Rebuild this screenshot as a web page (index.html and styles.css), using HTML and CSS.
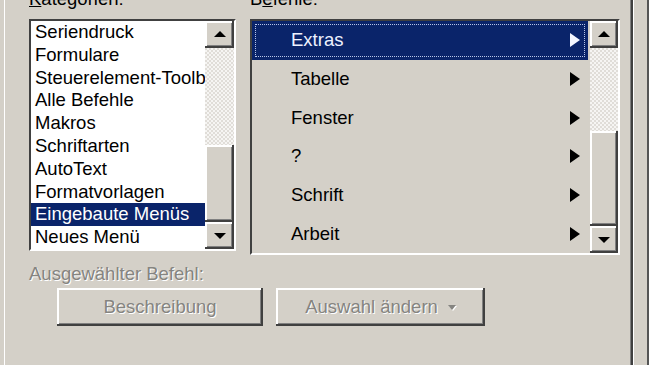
FILE: index.html
```html
<!DOCTYPE html>
<html lang="de">
<head>
  <meta charset="UTF-8">
  <meta name="viewport" content="width=device-width, initial-scale=1.0">
  <title>Anpassen - Befehle</title>
  <link rel="stylesheet" href="styles.css">
</head>
<body>
  <div class="outer">
    <div class="mid">
      <div class="tab">
        <div class="lists">
          <div class="group group-cat">
            <div class="label"><u>K</u>ategorien:</div>
            <div class="listbox cat">
              <ul class="items">
                <li>Seriendruck</li>
                <li>Formulare</li>
                <li>Steuerelement-Toolbox</li>
                <li>Alle Befehle</li>
                <li>Makros</li>
                <li>Schriftarten</li>
                <li>AutoText</li>
                <li>Formatvorlagen</li>
                <li class="sel">Eingebaute Menüs</li>
                <li>Neues Menü</li>
              </ul>
              <div class="scrollbar">
                <div class="sbtn"><span class="arr-up"></span></div>
                <div class="track"><div class="thumb"></div></div>
                <div class="sbtn"><span class="arr-down"></span></div>
              </div>
            </div>
          </div>

          <div class="group group-cmd">
            <div class="label">B<u>e</u>fehle:</div>
            <div class="listbox cmd">
              <ul class="items">
                <li class="sel"><span>Extras</span><span class="sub"></span></li>
                <li><span>Tabelle</span><span class="sub"></span></li>
                <li><span>Fenster</span><span class="sub"></span></li>
                <li><span>?</span><span class="sub"></span></li>
                <li><span>Schrift</span><span class="sub"></span></li>
                <li><span>Arbeit</span><span class="sub"></span></li>
              </ul>
              <div class="scrollbar">
                <div class="sbtn"><span class="arr-up"></span></div>
                <div class="track"><div class="thumb"></div></div>
                <div class="sbtn"><span class="arr-down"></span></div>
              </div>
            </div>
          </div>
        </div>

        <div class="selected-label">Ausgewählter Befehl:</div>
        <div class="buttons">
          <button class="btn" disabled>Beschreibung</button>
          <button class="btn btn-wide" disabled>Auswahl ändern <span class="drop"></span></button>
        </div>
      </div>
    </div>
  </div>
</body>
</html>
```

FILE: styles.css
```css
/* Win2000 classic colours */
:root {
  --face: #d4d0c8;
  --shadow: #808080;
  --dark: #404040;
  --light: #fff;
  --select: #0a246a;
}
* { box-sizing: border-box; }
body {
  margin: 0;
  background: var(--face);
  font-family: "Liberation Sans", Arial, sans-serif;
  font-size: 18.5px;
  color: #000;
  overflow: hidden;
}
.outer {
  width: 649px;
  height: 365px;
  padding-left: 4px;
  border-right: 2px solid #555;
  overflow: hidden;
}
.mid {
  height: 100%;
  border-left: 1px solid var(--light);
  padding-left: 9px;
}
.tab {
  width: 620px;
  height: 100%;
  padding-left: 15px;
  display: flex;
  flex-direction: column;
  align-items: flex-start;
  box-shadow: inset -1px 0 var(--light), inset -3px 0 var(--dark), inset -4px 0 var(--shadow);
}

/* lists */
.lists {
  display: flex;
  gap: 14px;
  align-items: flex-start;
  margin-top: -12px;
}
.group-cat { width: 207px; }
.group-cmd { width: 370px; }
.label {
  line-height: 21px;
  margin-bottom: 10px;
}
.listbox {
  display: flex;
  border: 2px solid;
  border-color: var(--dark) var(--light) var(--light) var(--dark);
}
.items {
  flex: 1;
  min-width: 0;
  list-style: none;
  margin: 0;
  padding: 0;
}
.cat {
  height: 232px;
  background: #fff;
}
.cat li {
  height: 22.8px;
  line-height: 22.8px;
  padding-left: 4px;
  white-space: nowrap;
  overflow: hidden;
}
.cat li.sel {
  background: var(--select);
  color: #fff;
}
.cat .scrollbar { width: 29px; }
.cmd {
  height: 236px;
  background: var(--face);
}
.cmd li {
  height: 38.67px;
  display: flex;
  align-items: center;
  justify-content: space-between;
  padding: 0 10px 0 39px;
}
.cmd li.sel {
  background: var(--select);
  color: #eef2ff;
  margin-right: 2px;
  padding-right: 8px;
  outline: 1px dotted #b8c5e8;
  outline-offset: -4px;
}
.sub {
  width: 0;
  height: 0;
  border-left: 10px solid #000;
  border-top: 7px solid transparent;
  border-bottom: 7px solid transparent;
}
.sel .sub { border-left-color: #f4f6ff; }

/* scrollbars */
.scrollbar {
  flex: none;
  width: 28px;
  display: flex;
  flex-direction: column;
}
.sbtn, .thumb {
  background: var(--face);
  box-shadow: inset -2px -2px var(--dark), inset 2px 2px var(--light), inset -3px -3px var(--shadow);
}
.sbtn {
  height: 27px;
  display: flex;
  align-items: center;
  justify-content: center;
}
.arr-up, .arr-down {
  width: 0;
  height: 0;
  border-left: 6px solid transparent;
  border-right: 6px solid transparent;
}
.arr-up { border-bottom: 6px solid #000; margin-top: -1px; }
.arr-down { border-top: 6px solid #000; margin-top: 1px; }
.track {
  flex: 1;
  display: flex;
  flex-direction: column;
  background: repeating-conic-gradient(#f6f5f3 0 25%, #e0ddd8 0 50%) 0 0 / 4px 4px;
}
.thumb {
  margin-top: auto;
  height: 77px;
}
.cmd .thumb { height: 95px; }

/* bottom part */
.selected-label {
  margin-top: 8px;
  line-height: 21px;
  color: #858480;
  text-shadow: 1px 1px #fff;
}
.buttons {
  display: flex;
  gap: 13px;
  padding-left: 28px;
  margin-top: 4px;
}
.btn {
  width: 206px;
  height: 38px;
  border: none;
  background: var(--face);
  font: inherit;
  color: #858480;
  text-shadow: 1px 1px #fff;
  display: flex;
  align-items: center;
  justify-content: center;
  gap: 10px;
  box-shadow: inset -2px -2px var(--dark), inset 2px 2px var(--light), inset -3px -3px var(--shadow);
}
.btn-wide { width: 209px; }
.drop {
  width: 0;
  height: 0;
  border-top: 5px solid #858480;
  border-left: 4px solid transparent;
  border-right: 4px solid transparent;
  filter: drop-shadow(1px 1px 0 #fff);
}
```
